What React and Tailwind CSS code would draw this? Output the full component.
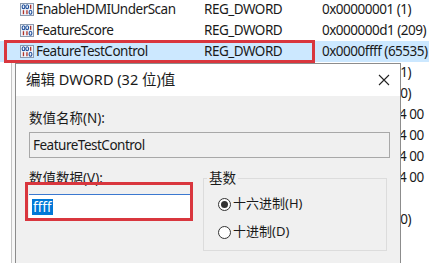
import React from 'react';

const font = { fontFamily: '"Noto Sans", "Noto Sans CJK SC", sans-serif' };

const rows = [
  { name: 'EnableHDMIUnderScan', type: 'REG_DWORD', value: '0x00000001 (1)' },
  { name: 'FeatureScore', type: 'REG_DWORD', value: '0x000000d1 (209)' },
  { name: 'FeatureTestControl', type: 'REG_DWORD', value: '0x0000ffff (65535)', selected: true },
  { name: 'GCOOption', type: 'REG_DWORD', value: '0x00000001 (1)' },
  { name: 'GCOVersion', type: 'REG_DWORD', value: '0x00000000 (0)' },
  { name: 'HardwareInformation', type: 'REG_BINARY', value: '00 00 00 00 04 00' },
  { name: 'HardwareInformation.A', type: 'REG_BINARY', value: '00 00 00 00 04 00' },
  { name: 'HardwareInformation.B', type: 'REG_BINARY', value: '00 00 00 00 04 00' },
  { name: 'HardwareInformation.C', type: 'REG_BINARY', value: '00 00 00 00 04 00' },
  { name: 'InstalledDisplayDrivers', type: 'REG_MULTI_SZ', value: '' },
  { name: 'LDDMFeatureLevel', type: 'REG_DWORD', value: '0x00000000 (0)' },
  { name: 'MatchingDeviceId', type: 'REG_SZ', value: '' },
];

function DwordIcon() {
  return (
    <svg width="14" height="13" viewBox="0 0 14 13" className="shrink-0">
      <rect x="0.5" y="0.5" width="13" height="12" fill="#eef3fa" stroke="#8a9ab0" />
      <ellipse cx="3.5" cy="3.8" rx="1.4" ry="2" fill="none" stroke="#1f4f9a" strokeWidth="1.1" />
      <ellipse cx="7.2" cy="3.8" rx="1.4" ry="2" fill="none" stroke="#1f4f9a" strokeWidth="1.1" />
      <rect x="10" y="1.8" width="1.3" height="4" fill="#b0342a" />
      <rect x="2.8" y="7.2" width="1.3" height="4" fill="#b0342a" />
      <rect x="6.3" y="7.2" width="1.3" height="4" fill="#b0342a" />
      <ellipse cx="10.5" cy="9.2" rx="1.4" ry="2" fill="none" stroke="#1f4f9a" strokeWidth="1.1" />
    </svg>
  );
}

function Radio({ checked, label }) {
  return (
    <div className="flex items-center h-[20px]">
      <span className="w-[13px] h-[13px] rounded-full border border-[#333] bg-white flex items-center justify-center">
        {checked && <span className="w-[7px] h-[7px] rounded-full bg-[#333]" />}
      </span>
      <span className="ml-[2px] text-[13px] text-[#1a1a1a]">{label}</span>
    </div>
  );
}

export default function App() {
  return (
    <div className="relative w-[429px] h-[263px] overflow-hidden bg-white" style={font}>
      {/* registry value list */}
      <div className="-mt-px">
        {rows.map((r) => (
          <div
            key={r.name}
            className={`flex items-center h-[21px] text-[13.5px] tracking-[-0.5px] text-[#1a1a1a] ${r.selected ? 'bg-[#cce8ff]' : ''}`}
          >
            <div className="w-[204px] flex items-center pl-[20px] gap-[2px] shrink-0 overflow-hidden">
              <DwordIcon />
              <span className="whitespace-nowrap">{r.name}</span>
            </div>
            <div className="w-[118px] shrink-0 whitespace-nowrap overflow-hidden">{r.type}</div>
            <div className="whitespace-nowrap">{r.value}</div>
          </div>
        ))}
      </div>

      {/* red highlight on the selected row */}
      <div className="absolute left-[4px] top-[40px] w-[311px] h-[23px] border-[3px] border-[#d9363e]" />

      {/* edit DWORD dialog */}
      <div className="absolute left-[15px] top-[63px] w-[386px] h-[220px] border border-[#8c8c8c] bg-[#f0f0f0] shadow-[-3px_0_0_0_#f7f7f7,-4px_0_0_0_#c4c4c4]">
        <div className="h-[32px] bg-white flex items-center justify-between pl-[10px] pr-[10px]">
          <span className="text-[14.5px] text-[#1a1a1a]">编辑 DWORD (32 位)值</span>
          <svg width="12" height="12" viewBox="0 0 12 12">
            <path d="M1 1 L11 11 M11 1 L1 11" stroke="#222" strokeWidth="1.1" />
          </svg>
        </div>
        <div className="px-[13px]">
          <div className="mt-[14px] h-[17px] leading-[17px] text-[13.5px] text-[#1a1a1a]">数值名称(N):</div>
          <div className="mt-[5px] h-[26px] w-[361px] border border-[#a8a8a8] flex items-center pl-[3px] text-[13.5px] tracking-[-0.5px] text-[#1a1a1a]">
            FeatureTestControl
          </div>
          <div className="flex mt-[12px]">
            <div className="w-[174px] shrink-0">
              <div className="h-[17px] leading-[17px] text-[13.5px] text-[#1a1a1a]">数值数据(V):</div>
              <div className="mt-[7px] h-[24px] w-[161px] bg-white border-t border-[#3b78d0] flex items-center pl-[3px]">
                <span className="bg-[#0078d7] text-white text-[13.5px] leading-[16px] px-px">ffff</span>
              </div>
            </div>
            <fieldset className="w-[188px] h-[81px] border border-[#dcdcdc] pl-[14px] pt-[8px]">
              <legend className="ml-[-11px] px-[2px] text-[13.5px] text-[#1a1a1a] leading-[16px]">基数</legend>
              <Radio checked label="十六进制(H)" />
              <div className="mt-[8px]">
                <Radio label="十进制(D)" />
              </div>
            </fieldset>
          </div>
        </div>
      </div>

      {/* red highlight on the data field */}
      <div className="absolute left-[25px] top-[182px] w-[168px] h-[39px] border-[3px] border-[#d9363e]" />
    </div>
  );
}
